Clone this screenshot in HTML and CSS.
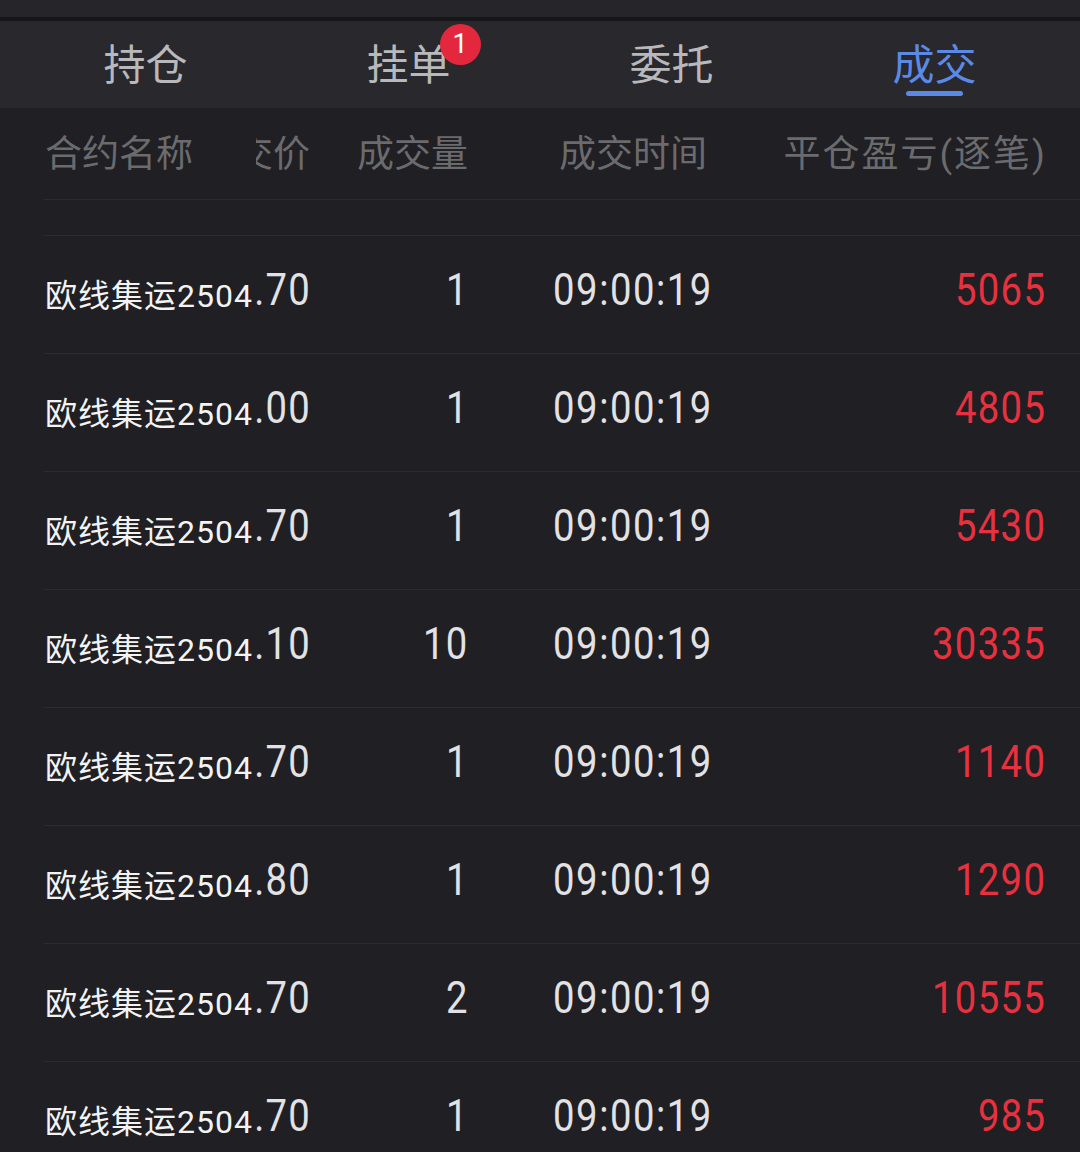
FILE: index.html
```html
<!DOCTYPE html>
<html lang="zh-CN">
<head>
    <meta charset="UTF-8">
    <meta name="viewport" content="width=device-width, initial-scale=1.0">
    <title>成交</title>
    <link rel="stylesheet" href="styles.css">
</head>
<body>

    <div class="top-strip"></div>

    <div class="tabs">
        <div class="tab"><span class="tab-label">持仓</span></div>
        <div class="tab"><span class="tab-label">挂单<span class="badge">1</span></span></div>
        <div class="tab"><span class="tab-label">委托</span></div>
        <div class="tab active"><span class="tab-label">成交</span></div>
    </div>

    <div class="list" id="listaTrades">
        <div class="row head">
            <div class="cell name">合约名称</div>
            <div class="cell price">成交价</div>
            <div class="cell vol">成交量</div>
            <div class="cell time">成交时间</div>
            <div class="cell pnl"><span class="pnl-title">平仓盈亏(逐笔)</span></div>
        </div>
        <div class="row gap"></div>
    </div>

    <script>
        let trades = [
            { precio: "1826.70", vol: 1, hora: "09:00:19", pnl: 5065 },
            { precio: "1840.00", vol: 1, hora: "09:00:19", pnl: 4805 },
            { precio: "1818.70", vol: 1, hora: "09:00:19", pnl: 5430 },
            { precio: "1823.10", vol: 10, hora: "09:00:19", pnl: 30335 },
            { precio: "1846.70", vol: 1, hora: "09:00:19", pnl: 1140 },
            { precio: "1843.80", vol: 1, hora: "09:00:19", pnl: 1290 },
            { precio: "1831.70", vol: 2, hora: "09:00:19", pnl: 10555 },
            { precio: "1848.70", vol: 1, hora: "09:00:19", pnl: 985 }
        ];

        let lista = document.getElementById("listaTrades");
        trades.forEach(t => {
            lista.innerHTML += `
                <div class="row item">
                    <div class="cell name">欧线集运2504</div>
                    <div class="cell price num"><span>${t.precio}</span></div>
                    <div class="cell vol num"><span>${t.vol}</span></div>
                    <div class="cell time num"><span>${t.hora}</span></div>
                    <div class="cell pnl num red"><span>${t.pnl}</span></div>
                </div>
            `;
        });
    </script>

</body>
</html>
```

FILE: styles.css
```css
body {
    margin: 0;
    background-color: #1f1f24;
    font-family: Roboto, "Noto Sans CJK SC", sans-serif;
    overflow: hidden;
}

.top-strip {
    height: 17px;
    background-color: #25252a;
    border-bottom: 4px solid #17171a;
}

.tabs {
    display: flex;
    height: 87px;
    padding: 0 14px;
    background-color: #28282d;
}

.tab {
    flex: 1;
    display: flex;
    align-items: center;
    justify-content: center;
    color: #b9b9bb;
    font-size: 42px;
}

.tab-label {
    position: relative;
    line-height: 1;
    top: 1px;
}

.tab.active {
    color: #5b8ae6;
}

.tab.active .tab-label::after {
    content: "";
    position: absolute;
    left: 50%;
    top: calc(100% + 4px);
    width: 57px;
    height: 5px;
    margin-left: -28px;
    border-radius: 3px;
    background-color: #5b8ae6;
}

.badge {
    position: absolute;
    left: calc(100% - 11px);
    top: -21px;
    width: 41px;
    height: 41px;
    border-radius: 50%;
    background-color: #e3283e;
    color: white;
    font-family: Roboto, sans-serif;
    font-size: 27px;
    display: flex;
    align-items: center;
    justify-content: center;
}

.list {
    margin-left: 44px;
}

.row {
    display: grid;
    grid-template-columns: 212px 54px 158px 330px 247px;
    border-bottom: 1px solid #2b2b30;
    box-sizing: border-box;
}

.cell {
    display: flex;
    white-space: nowrap;
    line-height: 1;
}

.name {
    position: relative;
    z-index: 1;
    background-color: #1f1f24;
    padding-left: 1px;
}

.price, .vol, .pnl {
    justify-content: flex-end;
}

.time {
    justify-content: center;
}

.row.head {
    height: 92px;
    color: #6b6b6e;
    font-size: 37px;
}

.head .cell {
    align-items: center;
    padding-top: 2px;
}

.pnl-title {
    letter-spacing: 2px;
    margin-right: -2px;
}

.row.gap {
    height: 36px;
}

.row.item {
    height: 118px;
}

.item .cell {
    align-items: flex-start;
}

.item .name {
    padding-top: 44px;
    color: #f3f3f3;
    font-size: 32px;
    letter-spacing: 1px;
}

.num {
    padding-top: 31px;
    color: #e2e2e4;
    font-family: Roboto, sans-serif;
    font-size: 45px;
    letter-spacing: 1.5px;
}

.num span {
    display: inline-block;
    margin-right: -1px;
    transform: scaleX(0.85);
    transform-origin: right center;
}

.time span {
    letter-spacing: 1.8px;
    margin-right: 0;
    transform-origin: center center;
}

.red {
    color: #e8313f;
}
```
